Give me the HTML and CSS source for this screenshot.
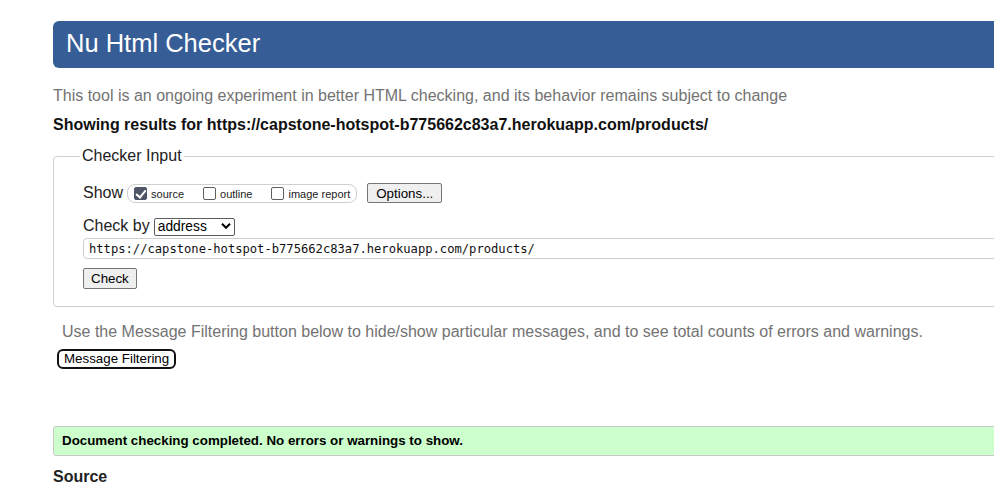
FILE: index.html
```html
<!DOCTYPE html>
<html lang="en">
<head>
<meta charset="utf-8">
<title>Showing results for https://capstone-hotspot-b775662c83a7.herokuapp.com/products/ - Nu Html Checker</title>
<link rel="stylesheet" href="styles.css">
</head>
<body>
<div class="page">
  <h1 class="banner">Nu Html Checker</h1>
  <p class="about">This tool is an ongoing experiment in better HTML checking, and its behavior remains subject to change</p>
  <p class="results">Showing results for https://capstone-hotspot-b775662c83a7.herokuapp.com/products/</p>

  <form class="checker-form">
    <fieldset class="checker">
      <legend class="checker-legend">Checker Input</legend>
      <div class="show-row">
        <span class="row-label">Show</span>
        <span class="show-box">
          <label class="opt"><input class="cb" type="checkbox" checked><span>source</span></label>
          <label class="opt"><input class="cb" type="checkbox"><span>outline</span></label>
          <label class="opt"><input class="cb" type="checkbox"><span>image report</span></label>
        </span>
        <button type="button" class="btn btn-options">Options...</button>
      </div>
      <div class="checkby-row">
        <span class="row-label">Check by</span>
        <span class="select-wrap">
          <select class="select">
            <option>address</option>
            <option>file upload</option>
            <option>text input</option>
          </select>
          <svg class="chevron" width="10" height="6" viewBox="0 0 10 6"><polyline points="1,0.8 5,4.8 9,0.8" fill="none" stroke="#000" stroke-width="2"/></svg>
        </span>
      </div>
      <input class="url" type="url" value="https://capstone-hotspot-b775662c83a7.herokuapp.com/products/">
      <button type="submit" class="btn btn-check">Check</button>
    </fieldset>
  </form>

  <p class="filter-note">Use the Message Filtering button below to hide/show particular messages, and to see total counts of errors and warnings.</p>
  <button type="button" class="btn-filter">Message Filtering</button>

  <div class="success">Document checking completed. No errors or warnings to show.</div>
  <h2 class="source-title">Source</h2>
</div>
</body>
</html>
```

FILE: styles.css
```css
html, body {
  margin: 0;
  padding: 0;
  overflow: hidden;
  background: #fff;
}

body {
  font-family: "Liberation Sans", Arial, sans-serif;
  font-size: 16px;
  color: #222;
}

.page {
  width: 1100px;
  padding: 21px 0 0 53px;
}

.banner {
  margin: 0;
  height: 47px;
  box-sizing: border-box;
  padding: 0 0 2px 13px;
  display: flex;
  align-items: center;
  background: #365d95;
  color: #fff;
  font-size: 25.5px;
  font-weight: normal;
  border-radius: 6px;
}

.about {
  margin: 19px 0 0;
  line-height: 18px;
  color: #737373;
}

.results {
  margin: 11px 0 0;
  line-height: 18px;
  font-weight: bold;
  color: #111;
}

.checker-form {
  margin: 12px 0 0;
}

.checker {
  margin: 0;
  padding: 17px 0 17px 29px;
  border: 1px solid #cfcfcf;
  border-radius: 4px;
  min-inline-size: 0;
}

.checker-legend {
  margin-left: -3px;
  padding: 0 2px;
  line-height: 20px;
  font-size: 16px;
  color: #222;
}

.show-row {
  display: flex;
  align-items: center;
  height: 20px;
}

.row-label {
  line-height: 18px;
  margin-right: 4px;
  color: #222;
}

.show-box {
  display: inline-flex;
  align-items: center;
  height: 19px;
  box-sizing: border-box;
  padding: 0 6px;
  border: 1px solid #cfcfcf;
  border-radius: 8px;
}

.opt {
  display: inline-flex;
  align-items: center;
  font-size: 11px;
  line-height: 13px;
  color: #222;
  margin-right: 19px;
}

.opt span {
  padding-top: 2px;
}

.opt:last-child {
  margin-right: 0;
}

.cb {
  appearance: none;
  -webkit-appearance: none;
  position: relative;
  width: 13px;
  height: 13px;
  margin: 0 4px 0 0;
  box-sizing: border-box;
  border: 1px solid #5f5f5f;
  border-radius: 2px;
  background: #fff;
}

.cb:checked {
  background: #4e5566;
  border-color: #4e5566;
}

.cb:checked::after {
  content: "";
  position: absolute;
  left: 3px;
  top: 0px;
  width: 4px;
  height: 8px;
  border: solid #fff;
  border-width: 0 2px 2px 0;
  transform: rotate(40deg);
}

.btn {
  font-family: "Liberation Sans", Arial, sans-serif;
  font-size: 13.33px;
  color: #000;
  background: #efefef;
  border: 1px solid #767676;
  border-radius: 2px;
  box-sizing: border-box;
  line-height: 15px;
}

.btn-options {
  margin-left: 10px;
  height: 20px;
  padding: 0 8px;
}

.checkby-row {
  display: flex;
  align-items: center;
  height: 18px;
  margin-top: 14px;
}

.select-wrap {
  position: relative;
  display: inline-block;
  height: 18px;
}

.select {
  appearance: none;
  -webkit-appearance: none;
  width: 81px;
  height: 18px;
  box-sizing: border-box;
  margin: 0;
  padding: 0 0 0 3px;
  border: 1px solid #5c5c5c;
  border-radius: 2px;
  background: #fff;
  font-family: "Liberation Sans", Arial, sans-serif;
  font-size: 13.8px;
  color: #000;
  line-height: 16px;
}

.chevron {
  position: absolute;
  right: 4px;
  top: 6px;
  pointer-events: none;
}

.url {
  display: block;
  box-sizing: border-box;
  width: 100%;
  height: 21px;
  margin: 3px 0 0;
  padding: 0 0 0 5px;
  border: 1px solid #cfcfcf;
  border-radius: 4px;
  font-family: "DejaVu Sans Mono", "Liberation Mono", monospace;
  font-size: 12.15px;
  color: #111;
  background: #fff;
}

.btn-check {
  display: block;
  margin-top: 9px;
  height: 21px;
  padding: 0 7px;
}

.filter-note {
  margin: 16px 0 0 9px;
  line-height: 18px;
  color: #737373;
}

.btn-filter {
  display: block;
  margin: 8px 0 0 4px;
  height: 20px;
  box-sizing: border-box;
  padding: 0 5px;
  border: 2px solid #111;
  border-radius: 6px;
  background: #fff;
  font-family: "Liberation Sans", Arial, sans-serif;
  font-size: 13.33px;
  line-height: 14px;
  color: #000;
}

.success {
  margin-top: 57px;
  height: 30px;
  box-sizing: border-box;
  padding: 6px 8px;
  border: 1px solid #c8c8c8;
  border-radius: 3px;
  background: #ccffcc;
  font-size: 13.33px;
  line-height: 16px;
  font-weight: bold;
  color: #000;
}

.source-title {
  margin: 12px 0 0;
  font-size: 16px;
  line-height: 18px;
  font-weight: bold;
  color: #222;
}
```
